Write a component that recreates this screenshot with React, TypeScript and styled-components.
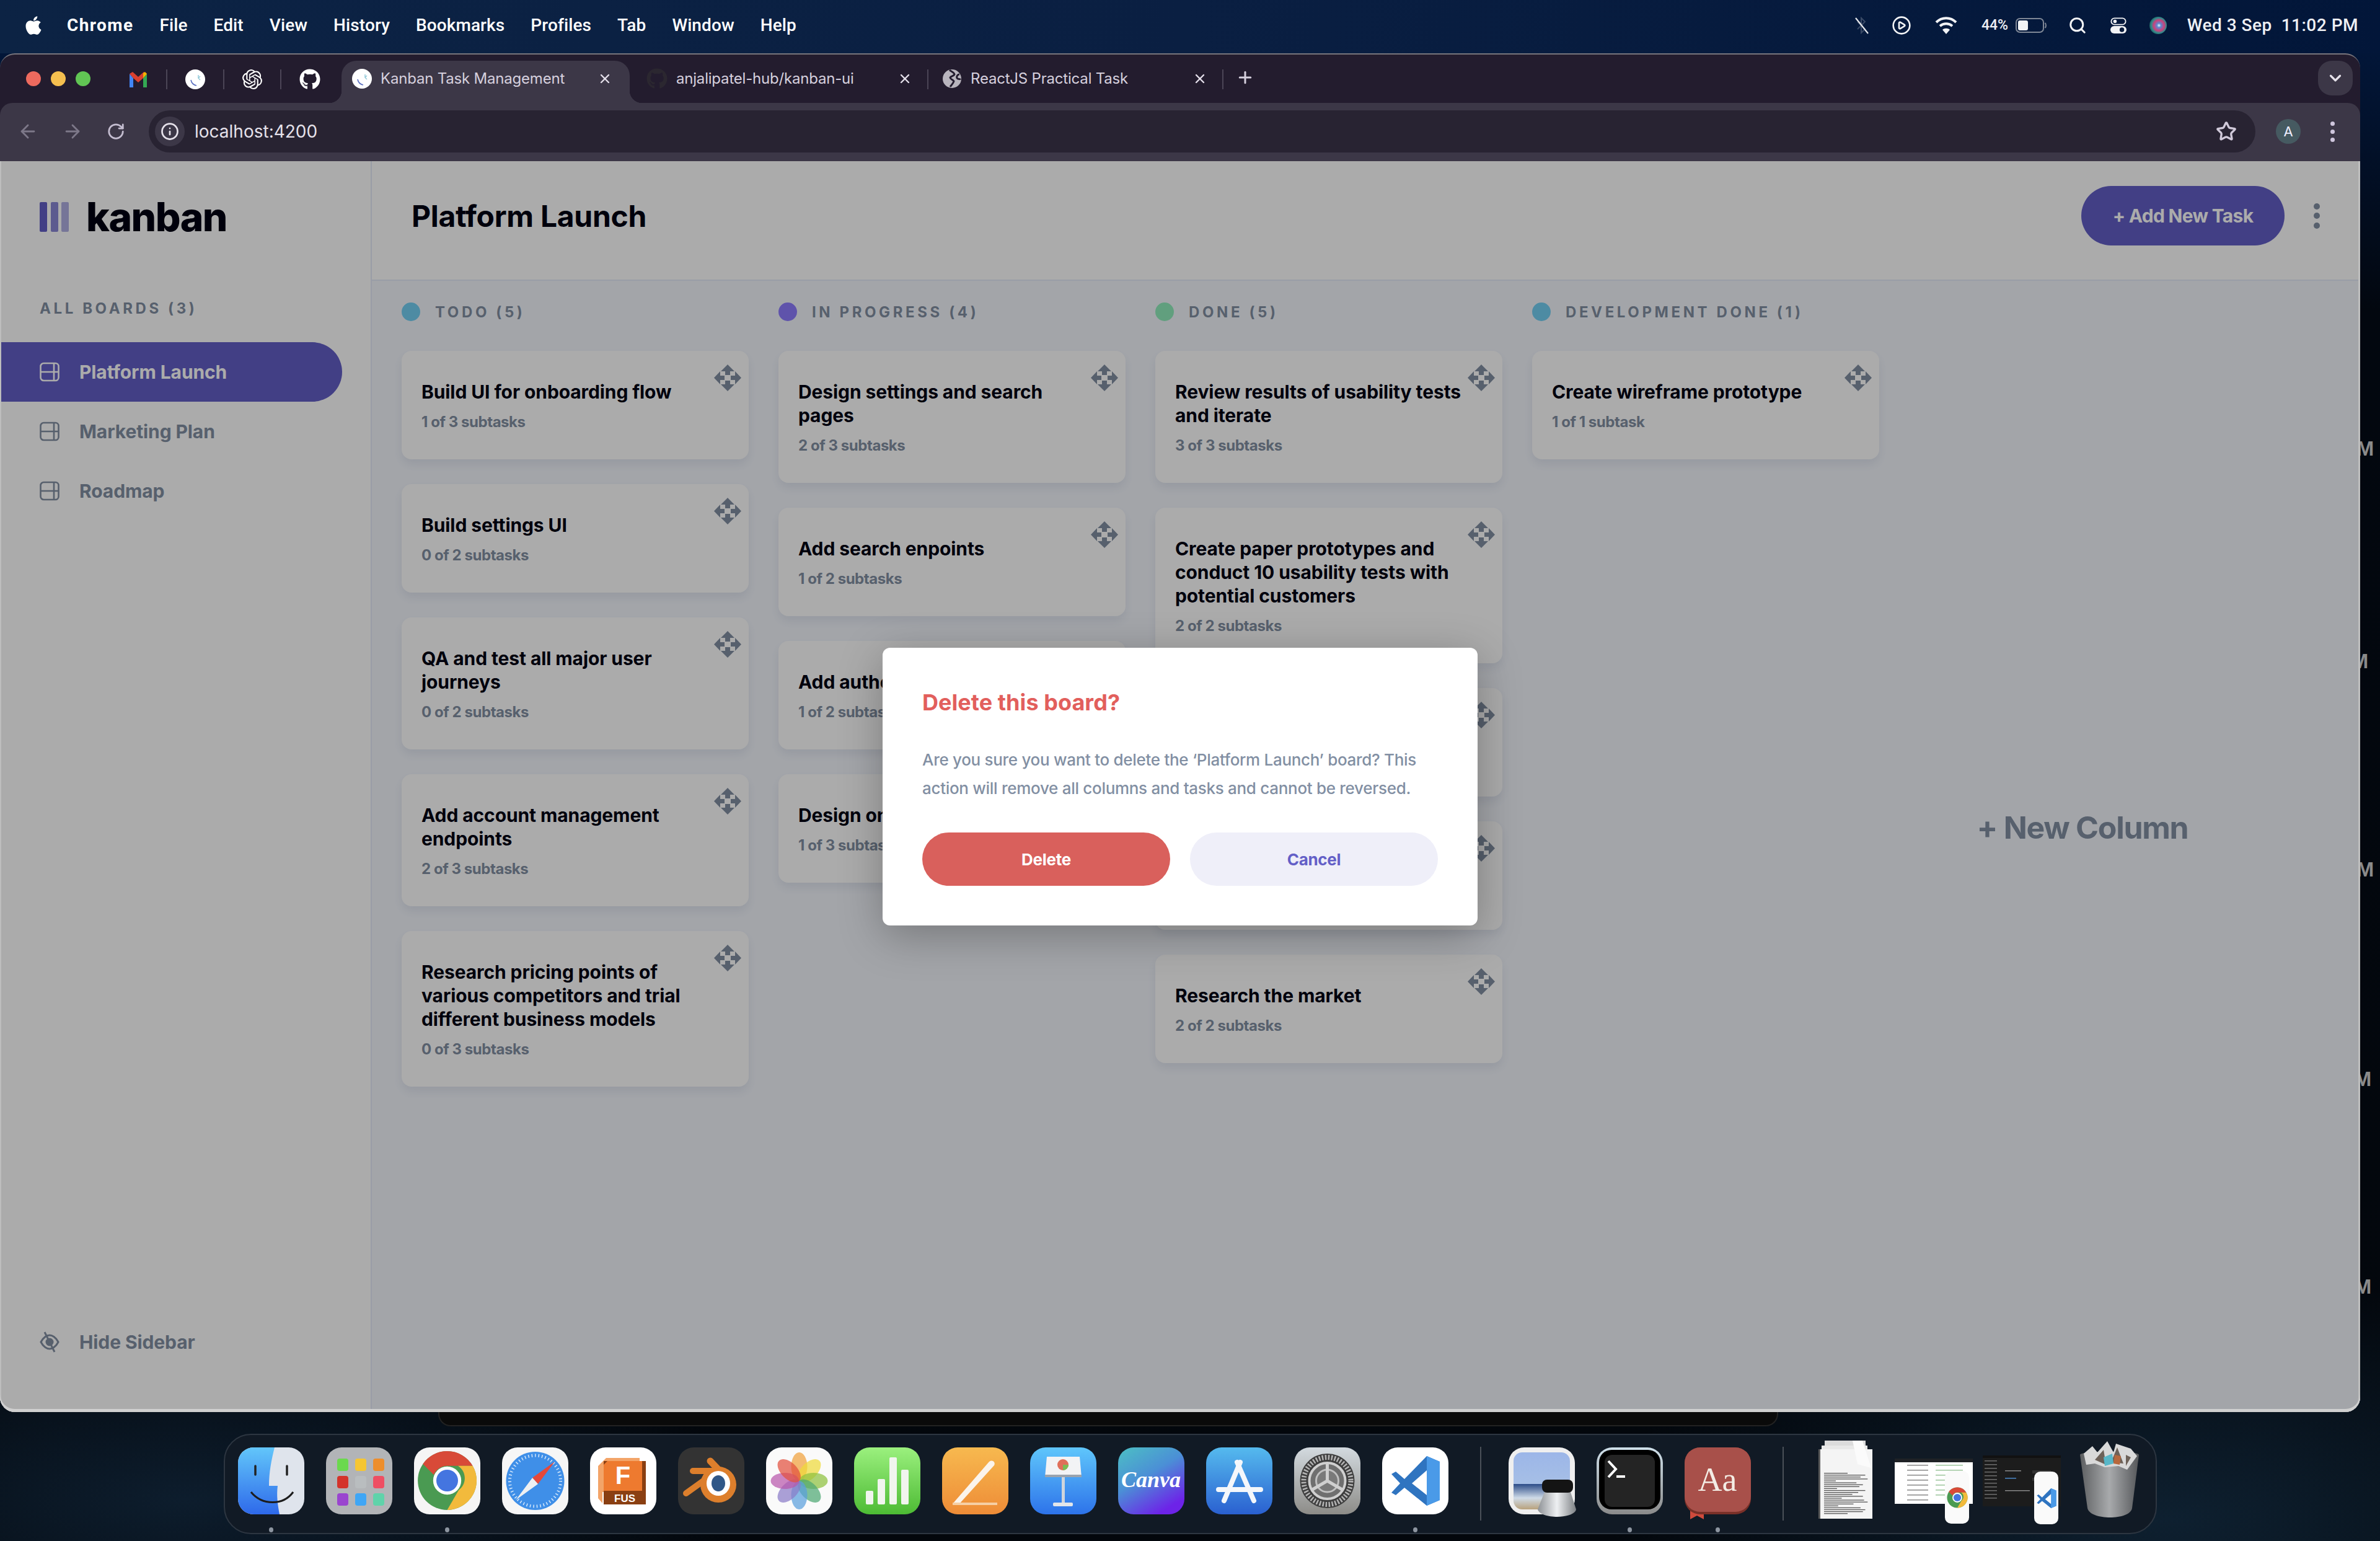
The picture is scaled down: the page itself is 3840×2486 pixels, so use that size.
import React from "react";
import styled, { createGlobalStyle } from "styled-components";
import { FaApple, FaGithub } from "react-icons/fa";
import { SiOpenai } from "react-icons/si";
import { ArrowLeft, ArrowRight, RotateCw, Info, Star, ChevronDown, X, Plus, Search, CirclePlay } from "lucide-react";

const UI = `"Inter", "Noto Sans", sans-serif`;
const SYS = `"Roboto", "Inter", sans-serif`;

const Global = createGlobalStyle`
  * { box-sizing: border-box; }
  html, body { margin: 0; padding: 0; width: 3840px; height: 2486px; overflow: hidden; background: #05090f; }
`;

const Desktop = styled.div`
  position: relative; width: 3840px; height: 2486px; overflow: hidden;
  display: flex; flex-direction: column; font-family: ${UI};
  background:
    radial-gradient(900px 300px at 300px 2420px, #0d1d2d 0%, rgba(13,29,45,0) 100%),
    radial-gradient(900px 400px at 3500px 2450px, #0e2030 0%, rgba(14,32,48,0) 100%),
    linear-gradient(180deg, #0a2044 0, #021638 86px, #02070f 500px, #03070c 100%);
`;
const MenuBar = styled.div`
  height: 86px; flex: none; display: flex; align-items: center; justify-content: space-between;
  padding: 0 35px 5px 42px; color: #fff; font-family: ${SYS}; font-size: 28px;
  background: linear-gradient(90deg, #0c2344, #0a1f42 50%, #021639);
`;
const MenuLeft = styled.div`display: flex; align-items: center; gap: 42px;`;
const AppleSlot = styled.div`display: flex; width: 26px; margin-right: -2px; svg { width: 30px; height: 34px; margin-left: -2px; }`;
const MenuItem = styled.span<{ $b?: boolean }>`font-weight: ${p => (p.$b ? 700 : 500)}; letter-spacing: ${p => (p.$b ? "1.4px" : ".1px")};`;
const MenuRight = styled.div`display: flex; align-items: center;`;
const Slot = styled.div<{ $w: number; $pl?: number }>`
  width: ${p => p.$w}px; padding-left: ${p => p.$pl ?? 0}px; display: flex; align-items: center; justify-content: center;
  font-size: 23px; font-weight: 500; color: #eef0f4;
`;
const Clock = styled.div`width: 288px; font-size: 28px; font-weight: 500; letter-spacing: .5px; color: #eef0f4; white-space: pre; text-align: right;`;

const BrowserWindow = styled.div`
  position: relative; z-index: 2; width: 3808px; height: 2192px; flex: none;
  border-radius: 24px; overflow: hidden; background: #231c2e; border-top: 2px solid #77757c;
  display: flex; flex-direction: column;
`;
const TabStrip = styled.div`height: 78px; flex: none; display: flex; align-items: flex-start; padding-top: 10px; color: #d6d0de; font-size: 24px;`;
const Lights = styled.div`display: flex; gap: 16px; margin: 17px 32px 0 42px;`;
const Light = styled.span<{ $c: string }>`width: 24px; height: 24px; border-radius: 50%; background: ${p => p.$c};`;
const Pinned = styled.div<{ $sep?: boolean }>`
  width: 92px; height: 32px; margin-top: 14px; display: flex; align-items: center; justify-content: center;
  border-right: ${p => (p.$sep ? "2px solid #4b4556" : "none")};
`;
const PinnedGroup = styled.div`display: flex; margin-right: 5px;`;
const Tab = styled.div<{ $w: number; $active?: boolean }>`
  position: relative; width: ${p => p.$w}px; height: 68px; display: flex; align-items: center; padding: 0 0 11px 17px;
  border-radius: 24px 24px 0 0; background: ${p => (p.$active ? "#3c3747" : "transparent")};
  &::before, &::after {
    content: ""; display: ${p => (p.$active ? "block" : "none")}; position: absolute; bottom: 0; width: 20px; height: 20px;
  }
  &::before { left: -20px; background: radial-gradient(circle at 0 0, transparent 20px, #3c3747 20.5px); }
  &::after { right: -20px; background: radial-gradient(circle at 100% 0, transparent 20px, #3c3747 20.5px); }
`;
const TabSep = styled.span`position: absolute; right: 0; top: 14px; width: 2px; height: 32px; background: #4b4556;`;
const TabIcon = styled.span<{ $ml?: number }>`display: flex; margin-left: ${p => p.$ml ?? 0}px;`;
const TabTitle = styled.span<{ $w: number }>`width: ${p => p.$w}px; margin-left: 14px; white-space: nowrap; letter-spacing: -.2px;`;
const NewTab = styled.div`margin: 12px 0 0 20px; display: flex; color: #d6d0de;`;
const TabMenu = styled.div`
  margin: 0 12px 0 auto; width: 56px; height: 56px; border-radius: 22px; background: #3c3747;
  display: flex; align-items: center; justify-content: center; color: #e6e2ea;
`;
const Toolbar = styled.div`
  height: 94px; flex: none; background: #3c3747; display: flex; align-items: center; padding: 0 28px 2px 28px;
  border-radius: 20px 20px 0 0; color: #bdb6c8;
`;
const NavBtn = styled.div<{ $dim?: boolean }>`width: 72px; display: flex; color: ${p => (p.$dim ? "#7d7889" : "#c4bdd0")};`;
const AddressBar = styled.div`
  flex: none; width: 3399px; height: 68px; margin-left: -4px; border-radius: 34px; background: #282332;
  display: flex; align-items: center; padding: 0 30px 0 10px; color: #e5e1ea; font-size: 28px;
`;
const SiteInfo = styled.div`width: 48px; height: 48px; border-radius: 50%; background: #3c3747; display: flex; align-items: center; justify-content: center; color: #e5e1ea; margin-right: 16px;`;
const StarSlot = styled.div`margin-left: auto; display: flex; color: #d0c9d9;`;
const Avatar = styled.div`width: 40px; height: 40px; margin-left: 33px; border-radius: 50%; background: #465a61; color: #eef; font-size: 22px; display: flex; align-items: center; justify-content: center;`;
const MoreChrome = styled.div`margin-left: 48px; display: flex; flex-direction: column; gap: 6px; span { width: 7px; height: 7px; border-radius: 50%; background: #cfc6dd; }`;

const Page = styled.div`position: relative; flex: 1; min-height: 0; display: flex; background: #fff;`;
const Sidebar = styled.aside`width: 600px; flex: none; display: flex; flex-direction: column; background: #fff; border-right: 2px solid #e4ebfa;`;
const Logo = styled.div`height: 179px; flex: none; display: flex; align-items: center; padding-left: 64px; gap: 28px;`;
const LogoBars = styled.div`display: flex; gap: 5.5px; span { width: 12px; height: 48px; border-radius: 2px; background: #635fc7; } span:nth-child(2) { opacity: .75; } span:nth-child(3) { opacity: .5; }`;
const LogoText = styled.div`font-size: 64px; font-weight: 800; letter-spacing: -1.5px; color: #000112;`;
const BoardsLabel = styled.div`margin: 39px 0 34px 64px; height: 40px; line-height: 40px; font-size: 24px; font-weight: 700; letter-spacing: 4.6px; color: #828fa3;`;
const BoardItem = styled.div<{ $active?: boolean }>`
  width: 552px; height: 96px; flex: none; display: flex; align-items: center; gap: 32px; padding-left: 64px;
  border-radius: 0 48px 48px 0; font-size: 30px; font-weight: 700; letter-spacing: -.1px;
  background: ${p => (p.$active ? "#635fc7" : "transparent")}; color: ${p => (p.$active ? "#fff" : "#828fa3")};
`;
const HideRow = styled.div`margin-top: auto; height: 60px; margin-bottom: 83px; display: flex; align-items: center; gap: 32px; padding-left: 64px; font-size: 30px; font-weight: 700; letter-spacing: -.1px; color: #828fa3;`;

const Main = styled.main`flex: 1; min-width: 0; display: flex; flex-direction: column; background: #f4f7fd;`;
const Header = styled.header`
  height: 193px; flex: none; background: #fff; border-bottom: 2px solid #e4ebfa; display: flex; align-items: center;
  padding: 0 65px 15px 64px;
`;
const Title = styled.h1`margin: 0; font-size: 48px; font-weight: 700; letter-spacing: -.3px; color: #000112;`;
const AddBtn = styled.button`
  margin-left: auto; width: 328px; height: 96px; border: 0; border-radius: 48px; background: #635fc7; color: #fff;
  font: 700 30px ${UI}; letter-spacing: -.7px;
`;
const More = styled.div`margin-left: 47px; display: flex; flex-direction: column; gap: 5.5px; span { width: 10px; height: 10px; border-radius: 50%; background: #828fa3; }`;
const Board = styled.div`flex: 1; min-height: 0; overflow: hidden; display: flex; gap: 48px; padding: 35px 0 0 48px;`;
const Column = styled.section`width: 560px; flex: none; display: flex; flex-direction: column; gap: 40px;`;
const ColHead = styled.div`height: 30px; margin-bottom: 8px; display: flex; align-items: center; gap: 24px; font-size: 24px; font-weight: 700; letter-spacing: 4.6px; color: #828fa3;`;
const Dot = styled.span<{ $c: string }>`width: 30px; height: 30px; border-radius: 50%; background: ${p => p.$c};`;
const Card = styled.article`
  position: relative; background: #fff; border-radius: 16px; padding: 47px 32px 43px;
  box-shadow: 0 8px 16px rgba(54, 78, 126, .10);
`;
const CardTitle = styled.h3`margin: 0; width: 480px; font-size: 30px; line-height: 38px; font-weight: 700; letter-spacing: -.1px; color: #000112;`;
const CardSub = styled.p`margin: 13px 0 0; font-size: 24px; line-height: 34px; font-weight: 700; letter-spacing: -.45px; color: #828fa3;`;
const Move = styled.svg`position: absolute; top: 22px; right: 12px; width: 44px; height: 43px; fill: #828fa3;`;
const NewColumn = styled.div`width: 560px; height: 1694px; flex: none; display: flex; align-items: center; justify-content: center; font-size: 50px; font-weight: 700; letter-spacing: -1.3px; color: #828fa3;`;

const Overlay = styled.div`
  position: absolute; inset: 0; display: flex; align-items: center; justify-content: center;
  background: rgba(0,0,0,.33);
  box-shadow: inset 0 -5px 0 #cfcfcf, inset -3px 0 0 #bdbdbd, inset 2px 0 0 #bdbdbd;
  border-radius: 0 0 24px 24px;
`;
const Dialog = styled.div`width: 960px; height: 448px; padding: 64px; background: #fff; border-radius: 12px; box-shadow: 0 16px 70px rgba(0,0,0,.28);`;
const DialogTitle = styled.h2`margin: 0; height: 48px; line-height: 48px; font-size: 36px; font-weight: 700; letter-spacing: .05px; color: #e25f5c;`;
const DialogText = styled.p`margin: 46px 0 0; font-size: 26px; line-height: 46px; font-weight: 500; letter-spacing: -.3px; color: #828fa3; white-space: pre;`;
const DialogBtns = styled.div`display: flex; gap: 32px; margin-top: 48px;`;
const DialogBtn = styled.button<{ $danger?: boolean }>`
  width: 400px; height: 86px; border: 0; border-radius: 43px; font: 700 26px ${UI}; letter-spacing: -.3px;
  background: ${p => (p.$danger ? "#d9605c" : "#efeff9")}; color: ${p => (p.$danger ? "#fff" : "#635fc7")};
`;

const Behind = styled.div`
  position: absolute; z-index: 1; left: 707px; top: 2260px; width: 2162px; height: 41px; background: #0a0a0a;
  border-radius: 0 0 20px 20px; border: 2px solid #222; border-top: 0;
`;
const DeskLabel = styled.span<{ $y: number; $x: number }>`
  position: absolute; z-index: 1; left: ${p => p.$x}px; top: ${p => p.$y}px; font: 700 34px "Liberation Sans", sans-serif; line-height: 34px; color: #8a8a8a;
`;

const Dock = styled.div`
  position: relative; z-index: 2; margin: 35px 0 0 361px; width: 3119px; height: 162px; flex: none;
  border-radius: 44px; background: #111a25; border: 2px solid #2d3641; display: flex; padding: 20px 0 0 21px;
`;
const DockApp = styled.div<{ $run?: boolean; $w?: number; $mr?: number; $mt?: number }>`
  position: relative; width: ${p => p.$w ?? 107}px; height: 108px; flex: none;
  margin-right: ${p => p.$mr ?? 35}px; margin-top: ${p => p.$mt ?? 0}px;
  svg { display: block; overflow: visible; }
  &::after {
    content: ""; display: ${p => (p.$run ? "block" : "none")}; position: absolute; left: 50%; bottom: -29px;
    width: 7px; height: 8px; margin-left: -3.5px; border-radius: 50%; background: #8d95a0;
  }
`;
const DockSep = styled.span<{ $ml: number; $mr: number }>`width: 2px; height: 119px; margin: -1px ${p => p.$mr}px 0 ${p => p.$ml}px; background: #4a5058; flex: none;`;

const BoardIcon = () => (
  <svg width="32" height="32" viewBox="0 0 32 32" fill="none" stroke="currentColor" strokeWidth="2.6">
    <rect x="1.5" y="2" width="29" height="28" rx="5" /><path d="M1.5 16h29M23 2v28" />
  </svg>
);
const MoveIcon = () => (
  <Move viewBox="0 0 44 43">
    <polygon points="22,0 33,11 26,11 26,17 18,17 18,11 11,11" />
    <polygon points="22,43 33,32 26,32 26,26 18,26 18,32 11,32" />
    <polygon points="0,21.5 10,11 10,18 17,18 17,25 10,25 10,32" />
    <polygon points="44,21.5 34,11 34,18 27,18 27,25 34,25 34,32" />
  </Move>
);
const KanbanFav = () => (
  <svg width="32" height="32" viewBox="0 0 32 32">
    <circle cx="16" cy="16" r="16" fill="#fff" />
    <path d="M9 17c1 5 4 8 9 9" stroke="#5a6fc0" strokeWidth="1.6" fill="none" />
    <path d="M21 9v5M24 11l-3 3 3 3" stroke="#8fc8d8" strokeWidth="1.4" fill="none" />
  </svg>
);
const Gmail = () => (
  <svg width="30" height="26" viewBox="0 0 30 26">
    <path d="M1 4v22h6V11z" fill="#4285f4" /><path d="M29 4v22h-6V11z" fill="#34a853" />
    <path d="M1 4l5-3 9 8 9-8 5 3v0l-6 7-8 7-8-7z" fill="#d9402f" /><path d="M23 11l6-7-3-3-3 2z" fill="#f4b400" />
  </svg>
);
const Globe = () => (
  <svg width="32" height="32" viewBox="0 0 32 32">
    <circle cx="16" cy="16" r="15" fill="#b8b4bd" />
    <path d="M12 2c3 3 7 3 8 7-1 3-5 2-7 5 0 3 4 3 6 6-1 4-4 6-6 9M28 9c-3 0-5 3-4 6 2 2 5 2 6 1" stroke="#231c2e" strokeWidth="3" fill="none" />
  </svg>
);
const BluetoothOff = () => (
  <svg width="22" height="28" viewBox="0 0 22 28" fill="none">
    <path d="M4 8l12 12-6 6V2l6 6L4 20" stroke="#3a4a66" strokeWidth="2" />
    <path d="M1 2l20 25" stroke="#e5e7eb" strokeWidth="2.2" />
  </svg>
);
const WifiIcon = () => (
  <svg width="36" height="30" viewBox="0 0 36 30" fill="none" stroke="#f2f3f5" strokeWidth="4">
    <path d="M2 10C11 1 25 1 34 10M8 16c6-5 14-5 20 0" /><path d="M18 29l-6-7c3-3 9-3 12 0z" fill="#f2f3f5" stroke="none" />
  </svg>
);
const BatteryIcon = () => (
  <svg width="50" height="24" viewBox="0 0 50 24">
    <rect x="1" y="1" width="44" height="22" rx="6" fill="none" stroke="#7f8796" strokeWidth="2" />
    <rect x="4" y="4" width="16" height="16" rx="3" fill="#f2f3f5" />
    <path d="M47.5 8c2 2 2 6 0 8" stroke="#7f8796" strokeWidth="2" fill="none" />
  </svg>
);
const ControlIcon = () => (
  <svg width="26" height="28" viewBox="0 0 28 28">
    <rect x="1.5" y="1.5" width="25" height="11" rx="5.5" fill="none" stroke="#f2f3f5" strokeWidth="2" />
    <circle cx="8" cy="7" r="3" fill="#f2f3f5" />
    <rect x="0" y="15" width="28" height="13" rx="6.5" fill="#f2f3f5" />
    <circle cx="20" cy="21.5" r="4" fill="#0a1d3e" />
  </svg>
);
const Siri = () => (
  <svg width="28" height="28" viewBox="0 0 30 30">
    <defs>
      <radialGradient id="siri" cx=".55" cy=".5" r=".55">
        <stop offset="0" stopColor="#e8f6ff" /><stop offset=".22" stopColor="#5c88d0" /><stop offset=".55" stopColor="#cf3f7a" /><stop offset=".8" stopColor="#2f8c8c" /><stop offset="1" stopColor="#1d5c5e" />
      </radialGradient>
    </defs>
    <circle cx="15" cy="15" r="15" fill="url(#siri)" />
  </svg>
);

const ChromeLogo = ({ s = 107 }: { s?: number }) => (
  <svg width={s} height={s} viewBox="0 0 100 100">
    <circle cx="50" cy="50" r="46" fill="#4a9a52" />
    <path d="M50 4a46 46 0 0 1 40 23H50a23 23 0 0 0-21 14L12 24A46 46 0 0 1 50 4z" fill="#d84a38" />
    <path d="M90 27a46 46 0 0 1-40 69l18-31a23 23 0 0 0-1-38z" fill="#f2ba3c" />
    <circle cx="50" cy="50" r="22" fill="#fff" /><circle cx="50" cy="50" r="17" fill="#4475e0" />
  </svg>
);
const VsLogo = ({ w = 80, h = 82 }: { w?: number; h?: number }) => (
  <svg width={w} height={h} viewBox="0 0 80 82">
    <path d="M58 1L22 38 8 26 1 30l14 15L1 60l7 4 14-12 36 29 21-9V10z" fill="#2f74c0" />
    <path d="M58 1l21 9v62l-21 9z" fill="#4a9ae8" />
    <path d="M58 24L34 45l24 19z" fill="#fff" />
  </svg>
);
const Tile = ({ children, bg }: { children?: React.ReactNode; bg: string }) => (
  <svg width="107" height="108" viewBox="0 0 107 108">
    <rect width="107" height="108" rx="25" fill={bg} />
    {children}
  </svg>
);

const Finder = () => (
  <svg width="107" height="108" viewBox="0 0 107 108">
    <defs>
      <linearGradient id="fb" x1="0" y1="0" x2="0" y2="1"><stop offset="0" stopColor="#62c6fa" /><stop offset="1" stopColor="#2e69ea" /></linearGradient>
      <clipPath id="fc"><rect width="107" height="108" rx="25" /></clipPath>
    </defs>
    <g clipPath="url(#fc)">
      <rect width="107" height="108" fill="#dfe4ec" />
      <path d="M0 0h59c-5 20-9 40-9 62h14c-2 16 0 30 3 46H0z" fill="url(#fb)" />
    </g>
    <path d="M28 30v14M79 30v14" stroke="#222" strokeWidth="3.5" strokeLinecap="round" />
    <path d="M21 72c18 22 52 22 68 0" stroke="#1c1c1c" strokeWidth="3" fill="none" />
  </svg>
);
const Launchpad = () => {
  const cols = ["#6bd94e", "#f6c632", "#ed8e2c", "#d4332a", "#b9bdbf", "#ee4f63", "#9a45cf", "#3fa6f5", "#5fd3aa"];
  return (
    <Tile bg="#b2b4b7">
      {cols.map((c, i) => <rect key={c} x={18 + (i % 3) * 29} y={18 + Math.floor(i / 3) * 28} width="18" height="20" rx="4" fill={c} />)}
    </Tile>
  );
};
const ChromeApp = () => (
  <svg width="107" height="108" viewBox="0 0 107 108">
    <rect width="107" height="108" rx="25" fill="#f5f5f5" />
    <svg x="2" y="2" width="103" height="103" viewBox="0 0 100 100">
      <circle cx="50" cy="50" r="46" fill="#4a9a52" />
      <path d="M50 4a46 46 0 0 1 40 23H50a23 23 0 0 0-21 14L12 24A46 46 0 0 1 50 4z" fill="#d84a38" />
      <path d="M90 27a46 46 0 0 1-40 69l18-31a23 23 0 0 0-1-38z" fill="#f2ba3c" />
      <circle cx="50" cy="50" r="22" fill="#fff" /><circle cx="50" cy="50" r="17" fill="#4475e0" />
    </svg>
  </svg>
);
const Safari = () => (
  <Tile bg="#f6f6f6">
    <circle cx="53.5" cy="54" r="47" fill="#3f8fe8" />
    <circle cx="53.5" cy="54" r="41" fill="none" stroke="#d6e8fb" strokeWidth="5" strokeDasharray="1.5 4" />
    <polygon points="85,23 58,59 49,49" fill="#e5483a" />
    <polygon points="22,85 58,59 49,49" fill="#eef0f2" />
  </Tile>
);
const Fusion = () => (
  <Tile bg="#fff">
    <polygon points="13,30 26,17 80,17 80,72 20,72 20,90 13,82" fill="#f3a468" />
    <rect x="22" y="22" width="68" height="70" fill="#8a3f12" />
    <polygon points="22,28 28,22 84,22 84,70 22,70" fill="#ee7a2f" />
    <text x="53" y="59" fontFamily="Liberation Sans" fontWeight="700" fontSize="40" fill="#fff" textAnchor="middle">F</text>
    <text x="56" y="88" fontFamily="Liberation Sans" fontWeight="700" fontSize="17" fill="#fff" textAnchor="middle">FUS</text>
  </Tile>
);
const Blender = () => (
  <Tile bg="#333">
    <g stroke="#dd7f2c" strokeLinecap="round" fill="none">
      <path d="M52 22l36 38" strokeWidth="11" />
      <path d="M24 38h36" strokeWidth="10" />
      <path d="M52 46L13 74" strokeWidth="10" />
    </g>
    <circle cx="65" cy="60" r="29" fill="#dd7f2c" />
    <ellipse cx="65" cy="58" rx="19" ry="20" fill="#fff" /><ellipse cx="65" cy="58" rx="11" ry="13" fill="#2f5787" />
  </Tile>
);
const Photos = () => {
  const c = ["#f0a13c", "#efd93a", "#8ec03f", "#4da773", "#5a9fdc", "#8a7cc7", "#b957ac", "#e2503f"];
  return (
    <Tile bg="#fafafa">
      {c.map((f, i) => <ellipse key={f} cx="53.5" cy="31" rx="13" ry="23" fill={f} opacity=".72" transform={`rotate(${i * 45} 53.5 54)`} />)}
    </Tile>
  );
};
const Numbers = () => (
  <svg width="107" height="108" viewBox="0 0 107 108">
    <defs><linearGradient id="ng" x1="0" y1="0" x2="0" y2="1"><stop offset="0" stopColor="#9bf07e" /><stop offset="1" stopColor="#4dbb34" /></linearGradient></defs>
    <rect width="107" height="108" rx="25" fill="url(#ng)" />
    {[[19, 70, 22], [38, 51, 41], [57, 16, 76], [76, 36, 56]].map(([x, y, h]) => <rect key={x} x={x} y={y} width="12" height={h} rx="2" fill="#f1f5ee" />)}
  </svg>
);
const Pages = () => (
  <svg width="107" height="108" viewBox="0 0 107 108">
    <defs><linearGradient id="pg" x1="0" y1="0" x2="0" y2="1"><stop offset="0" stopColor="#f7b94f" /><stop offset="1" stopColor="#ee8c37" /></linearGradient></defs>
    <rect width="107" height="108" rx="25" fill="url(#pg)" />
    <path d="M17 91L76 23c4-4 11 0 8 6L27 92z" fill="#fbf4ec" />
    <rect x="17" y="89" width="72" height="4" fill="#f6cfa4" />
  </svg>
);
const Keynote = () => (
  <svg width="107" height="108" viewBox="0 0 107 108">
    <defs><linearGradient id="kg" x1="0" y1="0" x2="0" y2="1"><stop offset="0" stopColor="#5fc6fb" /><stop offset="1" stopColor="#2d73ea" /></linearGradient></defs>
    <rect width="107" height="108" rx="25" fill="url(#kg)" />
    <polygon points="27,15 80,15 83,48 24,48" fill="#f2f3f5" />
    <circle cx="53" cy="28" r="9" fill="#e06f5a" /><path d="M53 28h9a9 9 0 0 1-9 9z" fill="#79bc55" />
    <rect x="24" y="44" width="59" height="4" fill="#9aa3ad" />
    <rect x="51" y="48" width="5" height="42" fill="#cfd5dc" /><rect x="37" y="89" width="32" height="6" rx="2" fill="#e2e6ea" />
  </svg>
);
const Canva = () => (
  <svg width="107" height="108" viewBox="0 0 107 108">
    <defs><linearGradient id="cg" x1="0" y1="0" x2=".6" y2="1"><stop offset="0" stopColor="#4cc0c4" /><stop offset=".5" stopColor="#4b8fd6" /><stop offset="1" stopColor="#6d23e8" /></linearGradient></defs>
    <rect width="107" height="108" rx="25" fill="url(#cg)" />
    <text x="53" y="64" fontFamily="Liberation Serif" fontStyle="italic" fontWeight="700" fontSize="36" fill="#fff" textAnchor="middle">Canva</text>
  </svg>
);
const AppStore = () => (
  <svg width="107" height="108" viewBox="0 0 107 108">
    <defs><linearGradient id="ag" x1="0" y1="0" x2="0" y2="1"><stop offset="0" stopColor="#55baee" /><stop offset="1" stopColor="#2a60d0" /></linearGradient></defs>
    <rect width="107" height="108" rx="25" fill="url(#ag)" />
    <g stroke="#f4f7fb" strokeWidth="8" strokeLinecap="round" fill="none">
      <path d="M55 24L29 86M50 24l27 62M20 68h68" />
    </g>
  </svg>
);
const SettingsApp = () => (
  <svg width="107" height="108" viewBox="0 0 107 108">
    <defs><linearGradient id="sg" x1="0" y1="0" x2="0" y2="1"><stop offset="0" stopColor="#d3dadf" /><stop offset="1" stopColor="#8d8c88" /></linearGradient></defs>
    <rect width="107" height="108" rx="25" fill="url(#sg)" />
    <circle cx="53.5" cy="54" r="44" fill="#3e3e3e" />
    <circle cx="53.5" cy="54" r="38" fill="none" stroke="#b3b3b3" strokeWidth="8" strokeDasharray="2.5 2.5" />
    <circle cx="53.5" cy="54" r="29" fill="#6f6f6f" stroke="#cfcfcf" strokeWidth="4" />
    <circle cx="53.5" cy="54" r="18" fill="#7a7a7a" stroke="#c0c0c0" strokeWidth="3" />
    <path d="M53.5 54V26M53.5 54l24 14M53.5 54l-24 14" stroke="#cfcfcf" strokeWidth="5" />
  </svg>
);
const VsApp = () => (
  <svg width="107" height="108" viewBox="0 0 107 108">
    <rect width="107" height="108" rx="25" fill="#fff" />
    <svg x="14" y="13" width="80" height="82" viewBox="0 0 80 82">
      <path d="M58 1L22 38 8 26 1 30l14 15L1 60l7 4 14-12 36 29 21-9V10z" fill="#2f74c0" />
      <path d="M58 1l21 9v62l-21 9z" fill="#4a9ae8" />
      <path d="M58 24L34 45l24 19z" fill="#fff" />
    </svg>
  </svg>
);
const Preview = () => (
  <svg width="114" height="118" viewBox="0 0 114 118">
    <defs>
      <linearGradient id="prv" x1="0" y1="0" x2="0" y2="1"><stop offset="0" stopColor="#9cb6e8" /><stop offset=".55" stopColor="#a6bfe6" /><stop offset=".56" stopColor="#2f4f8a" /><stop offset=".8" stopColor="#cfdbe8" /><stop offset="1" stopColor="#b9a27c" /></linearGradient>
      <linearGradient id="glass" x1="0" y1="0" x2="1" y2="0"><stop offset="0" stopColor="#8e9296" /><stop offset=".5" stopColor="#eef0f2" /><stop offset="1" stopColor="#7d8185" /></linearGradient>
    </defs>
    <rect width="107" height="108" rx="25" fill="#efefef" />
    <rect x="8" y="8" width="91" height="92" rx="14" fill="url(#prv)" />
    <path d="M58 72h42l9 28c-3 16-58 16-62 0z" fill="url(#glass)" />
    <rect x="54" y="52" width="50" height="21" rx="8" fill="#141414" />
  </svg>
);
const Terminal = () => (
  <svg width="107" height="108" viewBox="0 0 107 108">
    <defs><linearGradient id="tg" x1="0" y1="0" x2="0" y2="1"><stop offset="0" stopColor="#cfe0ea" /><stop offset="1" stopColor="#8b8b8b" /></linearGradient></defs>
    <rect width="107" height="108" rx="25" fill="url(#tg)" />
    <rect x="4" y="4" width="99" height="96" rx="20" fill="#000" />
    <rect x="13" y="12" width="81" height="84" rx="12" fill="#242424" />
    <path d="M19 22l12 13-12 13" stroke="#fff" strokeWidth="4" fill="none" />
    <rect x="32" y="45" width="14" height="4" fill="#fff" />
  </svg>
);
const Dictionary = () => (
  <svg width="107" height="118" viewBox="0 0 107 118">
    <polygon points="9,100 31,100 31,116 20,110 9,116" fill="#cf4a3c" />
    <rect width="107" height="108" rx="25" fill="#7a3028" />
    <rect width="107" height="104" rx="25" fill="#a8504a" />
    <text x="53" y="70" fontFamily="Liberation Serif" fontSize="54" fill="#f3ece4" textAnchor="middle">Aa</text>
  </svg>
);
const lineW = [40, 70, 62, 74, 20, 55, 66, 60, 22, 70, 58, 48, 66, 30, 68, 74, 50, 24, 62, 70, 66, 40];
const DocStack = () => (
  <svg width="87" height="126" viewBox="0 0 87 126">
    <rect x="10" y="0" width="66" height="20" fill="#dcdcdc" /><rect x="5" y="8" width="74" height="20" fill="#e8e8e8" />
    <rect x="0" y="14" width="87" height="112" fill="#5b5b5b" />
    <rect x="3" y="14" width="84" height="112" fill="#f4f4f4" />
    <path d="M55 0h16l14 44-22-6z" fill="#fbfbfb" />
    {lineW.map((w, i) => <rect key={i} x="9" y={52 + i * 3.1} width={w * .95} height="1.3" fill="#555" />)}
  </svg>
);
const ThumbLight = () => (
  <svg width="126" height="73" viewBox="0 0 126 73">
    <rect width="126" height="73" fill="#fff" /><rect width="126" height="6" fill="#1f2226" />
    {[10, 18, 26, 34, 42, 50, 58, 66].map(y => <rect key={y} x="20" y={y} width="34" height="1.5" fill="#888" />)}
    {[10, 18, 26, 34, 42, 50, 58].map(y => <rect key={y} x="66" y={y} width="44" height="1.5" fill="#9bc59b" />)}
  </svg>
);
const ThumbDark = () => (
  <svg width="126" height="82" viewBox="0 0 126 82">
    <rect width="126" height="82" fill="#1c1c1c" /><rect width="126" height="4" fill="#111" />
    {[8, 14, 20, 26, 32, 38, 44, 50, 56, 62, 68].map(y => <rect key={y} x="3" y={y} width="20" height="1.5" fill="#6d6d6d" />)}
    <rect x="36" y="24" width="26" height="1.5" fill="#8a8a8a" /><rect x="80" y="24" width="30" height="5" fill="#333" />
    <rect x="36" y="36" width="18" height="1.5" fill="#4b87c7" /><rect x="80" y="36" width="30" height="5" fill="#333" />
    <rect x="36" y="56" width="40" height="1.5" fill="#8a8a8a" />
  </svg>
);
const Trash = () => (
  <svg width="95" height="123" viewBox="0 0 95 123">
    <defs><linearGradient id="tr" x1="0" y1="0" x2="1" y2="0"><stop offset="0" stopColor="#5d5f61" /><stop offset=".5" stopColor="#a8aaac" /><stop offset="1" stopColor="#55575a" /></linearGradient></defs>
    <path d="M0 22c0-7 95-7 95 0L84 108c-3 20-68 20-72 0z" fill="url(#tr)" />
    <path d="M6 20L20 8l8 10L44 0l10 18L58 4l24 8 10 12-16 22-14-6-22 2-16-6-14 2z" fill="#d9d9d9" />
    <path d="M24 30l14-16 4 24zM50 34l10-24 10 26zM74 22l8 4-8 14z" fill="#6d6158" />
    <path d="M38 26l14-6 2 16-14 4z" fill="#58b7c8" /><path d="M56 22l10 2-2 14-10-2z" fill="#b7683c" />
  </svg>
);

const Mini = styled.div<{ $l: number; $t: number }>`position: absolute; left: ${p => p.$l}px; top: ${p => p.$t}px; display: flex;`;
const MiniTile = styled.div`width: 39px; height: 85px; background: #fafafa; border-radius: 10px; display: flex; align-items: center; justify-content: center; overflow: hidden;`;

type T = { t: string; s: string };
const columns: { name: string; color: string; tasks: T[] }[] = [
  { name: "TODO (5)", color: "#74cff4", tasks: [
    { t: "Build UI for onboarding flow", s: "1 of 3 subtasks" },
    { t: "Build settings UI", s: "0 of 2 subtasks" },
    { t: "QA and test all major user journeys", s: "0 of 2 subtasks" },
    { t: "Add account management endpoints", s: "2 of 3 subtasks" },
    { t: "Research pricing points of various competitors and trial different business models", s: "0 of 3 subtasks" },
  ] },
  { name: "IN PROGRESS (4)", color: "#8e7dff", tasks: [
    { t: "Design settings and search pages", s: "2 of 3 subtasks" },
    { t: "Add search enpoints", s: "1 of 2 subtasks" },
    { t: "Add authentication endpoints", s: "1 of 2 subtasks" },
    { t: "Design onboarding flow", s: "1 of 3 subtasks" },
  ] },
  { name: "DONE (5)", color: "#91edbd", tasks: [
    { t: "Review results of usability tests and iterate", s: "3 of 3 subtasks" },
    { t: "Create paper prototypes and conduct 10 usability tests with potential customers", s: "2 of 2 subtasks" },
    { t: "Market discovery", s: "1 of 1 subtask" },
    { t: "Competitor analysis", s: "2 of 2 subtasks" },
    { t: "Research the market", s: "2 of 2 subtasks" },
  ] },
  { name: "DEVELOPMENT DONE (1)", color: "#74cff4", tasks: [
    { t: "Create wireframe prototype", s: "1 of 1 subtask" },
  ] },
];

export default function App() {
  return (
    <Desktop>
      <Global />
      <MenuBar>
        <MenuLeft>
          <AppleSlot><FaApple /></AppleSlot>
          <MenuItem $b>Chrome</MenuItem>
          {["File", "Edit", "View", "History", "Bookmarks", "Profiles", "Tab", "Window", "Help"].map(m => <MenuItem key={m}>{m}</MenuItem>)}
        </MenuLeft>
        <MenuRight>
          <Slot $w={64}><BluetoothOff /></Slot>
          <Slot $w={64}><CirclePlay size={32} strokeWidth={2} color="#f2f3f5" /></Slot>
          <Slot $w={80}><WifiIcon /></Slot>
          <Slot $w={67} $pl={10}>44%</Slot>
          <Slot $w={60}><BatteryIcon /></Slot>
          <Slot $w={90}><Search size={30} strokeWidth={2.4} color="#f2f3f5" /></Slot>
          <Slot $w={42}><ControlIcon /></Slot>
          <Slot $w={78} $pl={8}><Siri /></Slot>
          <Clock>{"Wed 3 Sep  11:02 PM"}</Clock>
        </MenuRight>
      </MenuBar>

      <BrowserWindow>
        <TabStrip>
          <Lights><Light $c="#ed6a5e" /><Light $c="#f5bf4f" /><Light $c="#61c554" /></Lights>
          <PinnedGroup>
            <Pinned $sep><Gmail /></Pinned>
            <Pinned $sep><KanbanFav /></Pinned>
            <Pinned $sep><SiOpenai size={32} color="#fff" /></Pinned>
            <Pinned><FaGithub size={34} color="#fff" /></Pinned>
          </PinnedGroup>
          <Tab $w={465} $active>
            <KanbanFav /><TabTitle $w={350}>Kanban Task Management</TabTitle><X size={24} strokeWidth={2.4} color="#e4dfea" />
          </Tab>
          <Tab $w={482}>
            <TabIcon $ml={10}><FaGithub size={34} color="#2b2730" /></TabIcon><TabTitle $w={357}>anjalipatel-hub/kanban-ui</TabTitle><X size={24} strokeWidth={2.4} color="#e4dfea" /><TabSep />
          </Tab>
          <Tab $w={476}>
            <TabIcon $ml={5}><Globe /></TabIcon><TabTitle $w={358}>ReactJS Practical Task</TabTitle><X size={24} strokeWidth={2.4} color="#e4dfea" /><TabSep />
          </Tab>
          <NewTab><Plus size={30} strokeWidth={2.4} /></NewTab>
          <TabMenu><ChevronDown size={30} strokeWidth={2.6} /></TabMenu>
        </TabStrip>
        <Toolbar>
          <NavBtn $dim><ArrowLeft size={34} strokeWidth={2} /></NavBtn>
          <NavBtn $dim><ArrowRight size={34} strokeWidth={2} /></NavBtn>
          <NavBtn><RotateCw size={30} strokeWidth={2.2} /></NavBtn>
          <AddressBar>
            <SiteInfo><Info size={30} strokeWidth={2.2} /></SiteInfo>
            localhost:4200
            <StarSlot><Star size={34} strokeWidth={2.4} /></StarSlot>
          </AddressBar>
          <Avatar>A</Avatar>
          <MoreChrome><span /><span /><span /></MoreChrome>
        </Toolbar>
        <Page>
          <Sidebar>
            <Logo><LogoBars><span /><span /><span /></LogoBars><LogoText>kanban</LogoText></Logo>
            <BoardsLabel>ALL BOARDS (3)</BoardsLabel>
            <BoardItem $active><BoardIcon />Platform Launch</BoardItem>
            <BoardItem><BoardIcon />Marketing Plan</BoardItem>
            <BoardItem><BoardIcon />Roadmap</BoardItem>
            <HideRow>
              <svg width="32" height="34" viewBox="0 0 32 34" fill="none" stroke="currentColor" strokeWidth="3">
                <path d="M2 17C6 9 12 6 16 6s10 3 14 11c-4 8-10 11-14 11S6 25 2 17z" /><circle cx="16" cy="17" r="5" fill="currentColor" /><path d="M8 1l16 32" />
              </svg>
              Hide Sidebar
            </HideRow>
          </Sidebar>
          <Main>
            <Header>
              <Title>Platform Launch</Title>
              <AddBtn>+ Add New Task</AddBtn>
              <More><span /><span /><span /></More>
            </Header>
            <Board>
              {columns.map(c => (
                <Column key={c.name}>
                  <ColHead><Dot $c={c.color} />{c.name}</ColHead>
                  {c.tasks.map(t => (
                    <Card key={t.t}>
                      <MoveIcon />
                      <CardTitle>{t.t}</CardTitle>
                      <CardSub>{t.s}</CardSub>
                    </Card>
                  ))}
                </Column>
              ))}
              <NewColumn>+ New Column</NewColumn>
            </Board>
          </Main>
          <Overlay>
            <Dialog>
              <DialogTitle>Delete this board?</DialogTitle>
              <DialogText>{"Are you sure you want to delete the ‘Platform Launch’ board? This\naction will remove all columns and tasks and cannot be reversed."}</DialogText>
              <DialogBtns>
                <DialogBtn $danger>Delete</DialogBtn>
                <DialogBtn>Cancel</DialogBtn>
              </DialogBtns>
            </Dialog>
          </Overlay>
        </Page>
      </BrowserWindow>

      <Behind />
      <DeskLabel $x={3802} $y={706}>M</DeskLabel>
      <DeskLabel $x={3793} $y={1049}>M</DeskLabel>
      <DeskLabel $x={3802} $y={1385}>M</DeskLabel>
      <DeskLabel $x={3798} $y={1723}>M</DeskLabel>
      <DeskLabel $x={3798} $y={2058}>M</DeskLabel>

      <Dock>
        <DockApp $run><Finder /></DockApp>
        <DockApp><Launchpad /></DockApp>
        <DockApp $run><ChromeApp /></DockApp>
        <DockApp><Safari /></DockApp>
        <DockApp><Fusion /></DockApp>
        <DockApp><Blender /></DockApp>
        <DockApp><Photos /></DockApp>
        <DockApp><Numbers /></DockApp>
        <DockApp><Pages /></DockApp>
        <DockApp><Keynote /></DockApp>
        <DockApp><Canva /></DockApp>
        <DockApp><AppStore /></DockApp>
        <DockApp><SettingsApp /></DockApp>
        <DockApp $run $mr={0}><VsApp /></DockApp>
        <DockSep $ml={51} $mr={44} />
        <DockApp><Preview /></DockApp>
        <DockApp $run><Terminal /></DockApp>
        <DockApp $run $mr={0}><Dictionary /></DockApp>
        <DockSep $ml={51} $mr={56} />
        <DockApp $w={87} $mr={36} $mt={-11}><DocStack /></DockApp>
        <DockApp $w={126} $mr={16} $mt={18}>
          <ThumbLight />
          <Mini $l={81} $t={20}><MiniTile><ChromeLogo s={36} /></MiniTile></Mini>
        </DockApp>
        <DockApp $w={126} $mr={31} $mt={13}>
          <ThumbDark />
          <Mini $l={83} $t={26}><MiniTile><VsLogo w={32} h={34} /></MiniTile></Mini>
        </DockApp>
        <DockApp $w={95} $mr={0} $mt={-10}><Trash /></DockApp>
      </Dock>
    </Desktop>
  );
}
